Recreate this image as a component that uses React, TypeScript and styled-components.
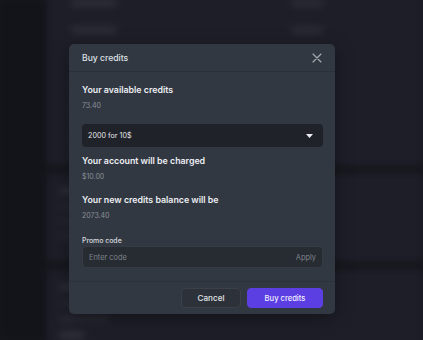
import React from "react";
import styled, { createGlobalStyle } from "styled-components";

const GlobalStyle = createGlobalStyle`
  html, body { margin: 0; padding: 0; background: #17181e; }
  body { font-family: Inter, "Noto Sans", sans-serif; -webkit-font-smoothing: antialiased; }
  * { box-sizing: border-box; }
`;

const Page = styled.div`
  position: relative;
  width: 423px;
  height: 340px;
  overflow: hidden;
  background: #17181e;
`;

const Backdrop = styled.div`
  display: flex;
  height: 100%;
  filter: blur(3.5px);
`;

const Sidebar = styled.div`
  width: 47px;
  flex: none;
  background: #131419;
`;

const Main = styled.div`
  flex: 1;
  display: flex;
  flex-direction: column;
  gap: 9px;
  margin-top: -20px;
  background: #16171c;
`;

const Card = styled.div<{ $h: number; $pad: number; $gap: number; $top: number }>`
  height: ${(p) => p.$h}px;
  flex: none;
  background: #1d1e28;
  padding: ${(p) => p.$top}px 100px 0 ${(p) => p.$pad}px;
  display: flex;
  flex-direction: column;
  gap: ${(p) => p.$gap}px;
`;

const BgRow = styled.div`
  display: flex;
  justify-content: space-between;
  height: 6px;
`;

const BgBar = styled.div<{ $w: number; $c: string }>`
  width: ${(p) => p.$w}px;
  height: 6px;
  border-radius: 3px;
  background: ${(p) => p.$c};
`;

const Overlay = styled.div`
  position: absolute;
  inset: 0;
  padding: 44px 0 0 69px;
  display: flex;
  align-items: flex-start;
`;

const Modal = styled.div`
  width: 266px;
  background: #323842;
  border-radius: 5px;
  box-shadow: 0 4px 18px rgba(0, 0, 0, 0.35);
  display: flex;
  flex-direction: column;
`;

const Header = styled.div`
  height: 28px;
  padding: 0 12px 0 13px;
  display: flex;
  align-items: center;
  justify-content: space-between;
  border-bottom: 1px solid #2c3139;
`;

const HeaderTitle = styled.div`
  color: #dfe2e7;
  font-size: 8.6px;
  font-weight: 500;
`;

const CloseBtn = styled.button`
  border: none;
  background: none;
  padding: 0;
  width: 12px;
  height: 12px;
  display: flex;
  align-items: center;
  justify-content: center;
  cursor: pointer;
`;

const Body = styled.div`
  padding: 0 12px 13px 13px;
  display: flex;
  flex-direction: column;
  border-bottom: 1px solid #2c3139;
`;

const Title = styled.div<{ $mt: number }>`
  margin-top: ${(p) => p.$mt}px;
  color: #eceef2;
  font-size: 8.8px;
  font-weight: 600;
  line-height: 14px;
`;

const Value = styled.div`
  margin-top: 3px;
  color: #8a8f98;
  font-size: 7px;
  line-height: 12px;
`;

const Select = styled.div`
  margin-top: 12px;
  height: 23px;
  border-radius: 4px;
  background: #1f2228;
  display: flex;
  align-items: center;
  justify-content: space-between;
  padding: 0 10px 0 6px;
  color: #e4e6ea;
  font-size: 7.2px;
`;

const Label = styled.div`
  margin-top: 14px;
  color: #d6d9de;
  font-size: 6.9px;
  font-weight: 500;
  line-height: 9px;
`;

const InputWrap = styled.div`
  margin-top: 1px;
  height: 22px;
  border-radius: 4px;
  background: #272b32;
  border: 1px solid #363b44;
  display: flex;
  align-items: center;
  justify-content: space-between;
  padding: 0 6px 0 6px;
`;

const Input = styled.input`
  border: none;
  background: none;
  outline: none;
  padding: 0;
  flex: 1;
  font-family: inherit;
  font-size: 7.4px;
  color: #e4e6ea;
  &::placeholder { color: #7f848d; }
`;

const Apply = styled.span`
  color: #7f848d;
  font-size: 7.4px;
`;

const Footer = styled.div`
  padding: 6px 12px 6px 13px;
  display: flex;
  justify-content: flex-end;
  gap: 6px;
`;

const Button = styled.button<{ $primary?: boolean; $w: number }>`
  width: ${(p) => p.$w}px;
  height: 20px;
  border-radius: 4px;
  font-family: inherit;
  font-size: ${(p) => (p.$primary ? 7.6 : 8.1)}px;
  font-weight: 500;
  cursor: pointer;
  color: ${(p) => (p.$primary ? "#f2f0ff" : "#e1e3e7")};
  background: ${(p) => (p.$primary ? "#5b3fe3" : "#2d323a")};
  border: 1px solid ${(p) => (p.$primary ? "#5b3fe3" : "#3b4049")};
`;

const rows1 = [0, 1, 2, 3, 4, 5];

export default function App() {
  return (
    <Page>
      <GlobalStyle />
      <Backdrop>
        <Sidebar />
        <Main>
          <Card $h={185} $pad={24} $top={20} $gap={21}>
            {rows1.map((i) => (
              <BgRow key={i}>
                <BgBar $w={46} $c="#2f303a" />
                <BgBar $w={32} $c="#2d2e38" />
              </BgRow>
            ))}
          </Card>
          <Card $h={87} $pad={13} $top={14} $gap={9}>
            <BgBar $w={14} $c="#33343f" />
            <BgBar $w={30} $c="#272832" />
            <BgBar $w={40} $c="#272832" />
            <BgBar $w={20} $c="#272832" />
          </Card>
          <Card $h={120} $pad={13} $top={14} $gap={10}>
            <BgBar $w={14} $c="#33343f" />
            <BgBar $w={30} $c="#272832" />
            <BgBar $w={48} $c="#2a2b35" />
            <BgBar $w={24} $c="#33343f" />
          </Card>
        </Main>
      </Backdrop>
      <Overlay>
        <Modal>
          <Header>
            <HeaderTitle>Buy credits</HeaderTitle>
            <CloseBtn aria-label="Close">
              <svg width="10" height="10" viewBox="0 0 10 10">
                <path d="M1 1L9 9M9 1L1 9" stroke="#a9adb5" strokeWidth="1.1" strokeLinecap="round" />
              </svg>
            </CloseBtn>
          </Header>
          <Body>
            <Title $mt={11}>Your available credits</Title>
            <Value>73.40</Value>
            <Select>
              <span>2000 for 10$</span>
              <svg width="7" height="4" viewBox="0 0 7 4">
                <path d="M0 0H7L3.5 4Z" fill="#eceef2" />
              </svg>
            </Select>
            <Title $mt={7}>Your account will be charged</Title>
            <Value>$10.00</Value>
            <Title $mt={10}>Your new credits balance will be</Title>
            <Value>2073.40</Value>
            <Label>Promo code</Label>
            <InputWrap>
              <Input placeholder="Enter code" />
              <Apply>Apply</Apply>
            </InputWrap>
          </Body>
          <Footer>
            <Button $w={60}>Cancel</Button>
            <Button $w={76} $primary>Buy credits</Button>
          </Footer>
        </Modal>
      </Overlay>
    </Page>
  );
}
